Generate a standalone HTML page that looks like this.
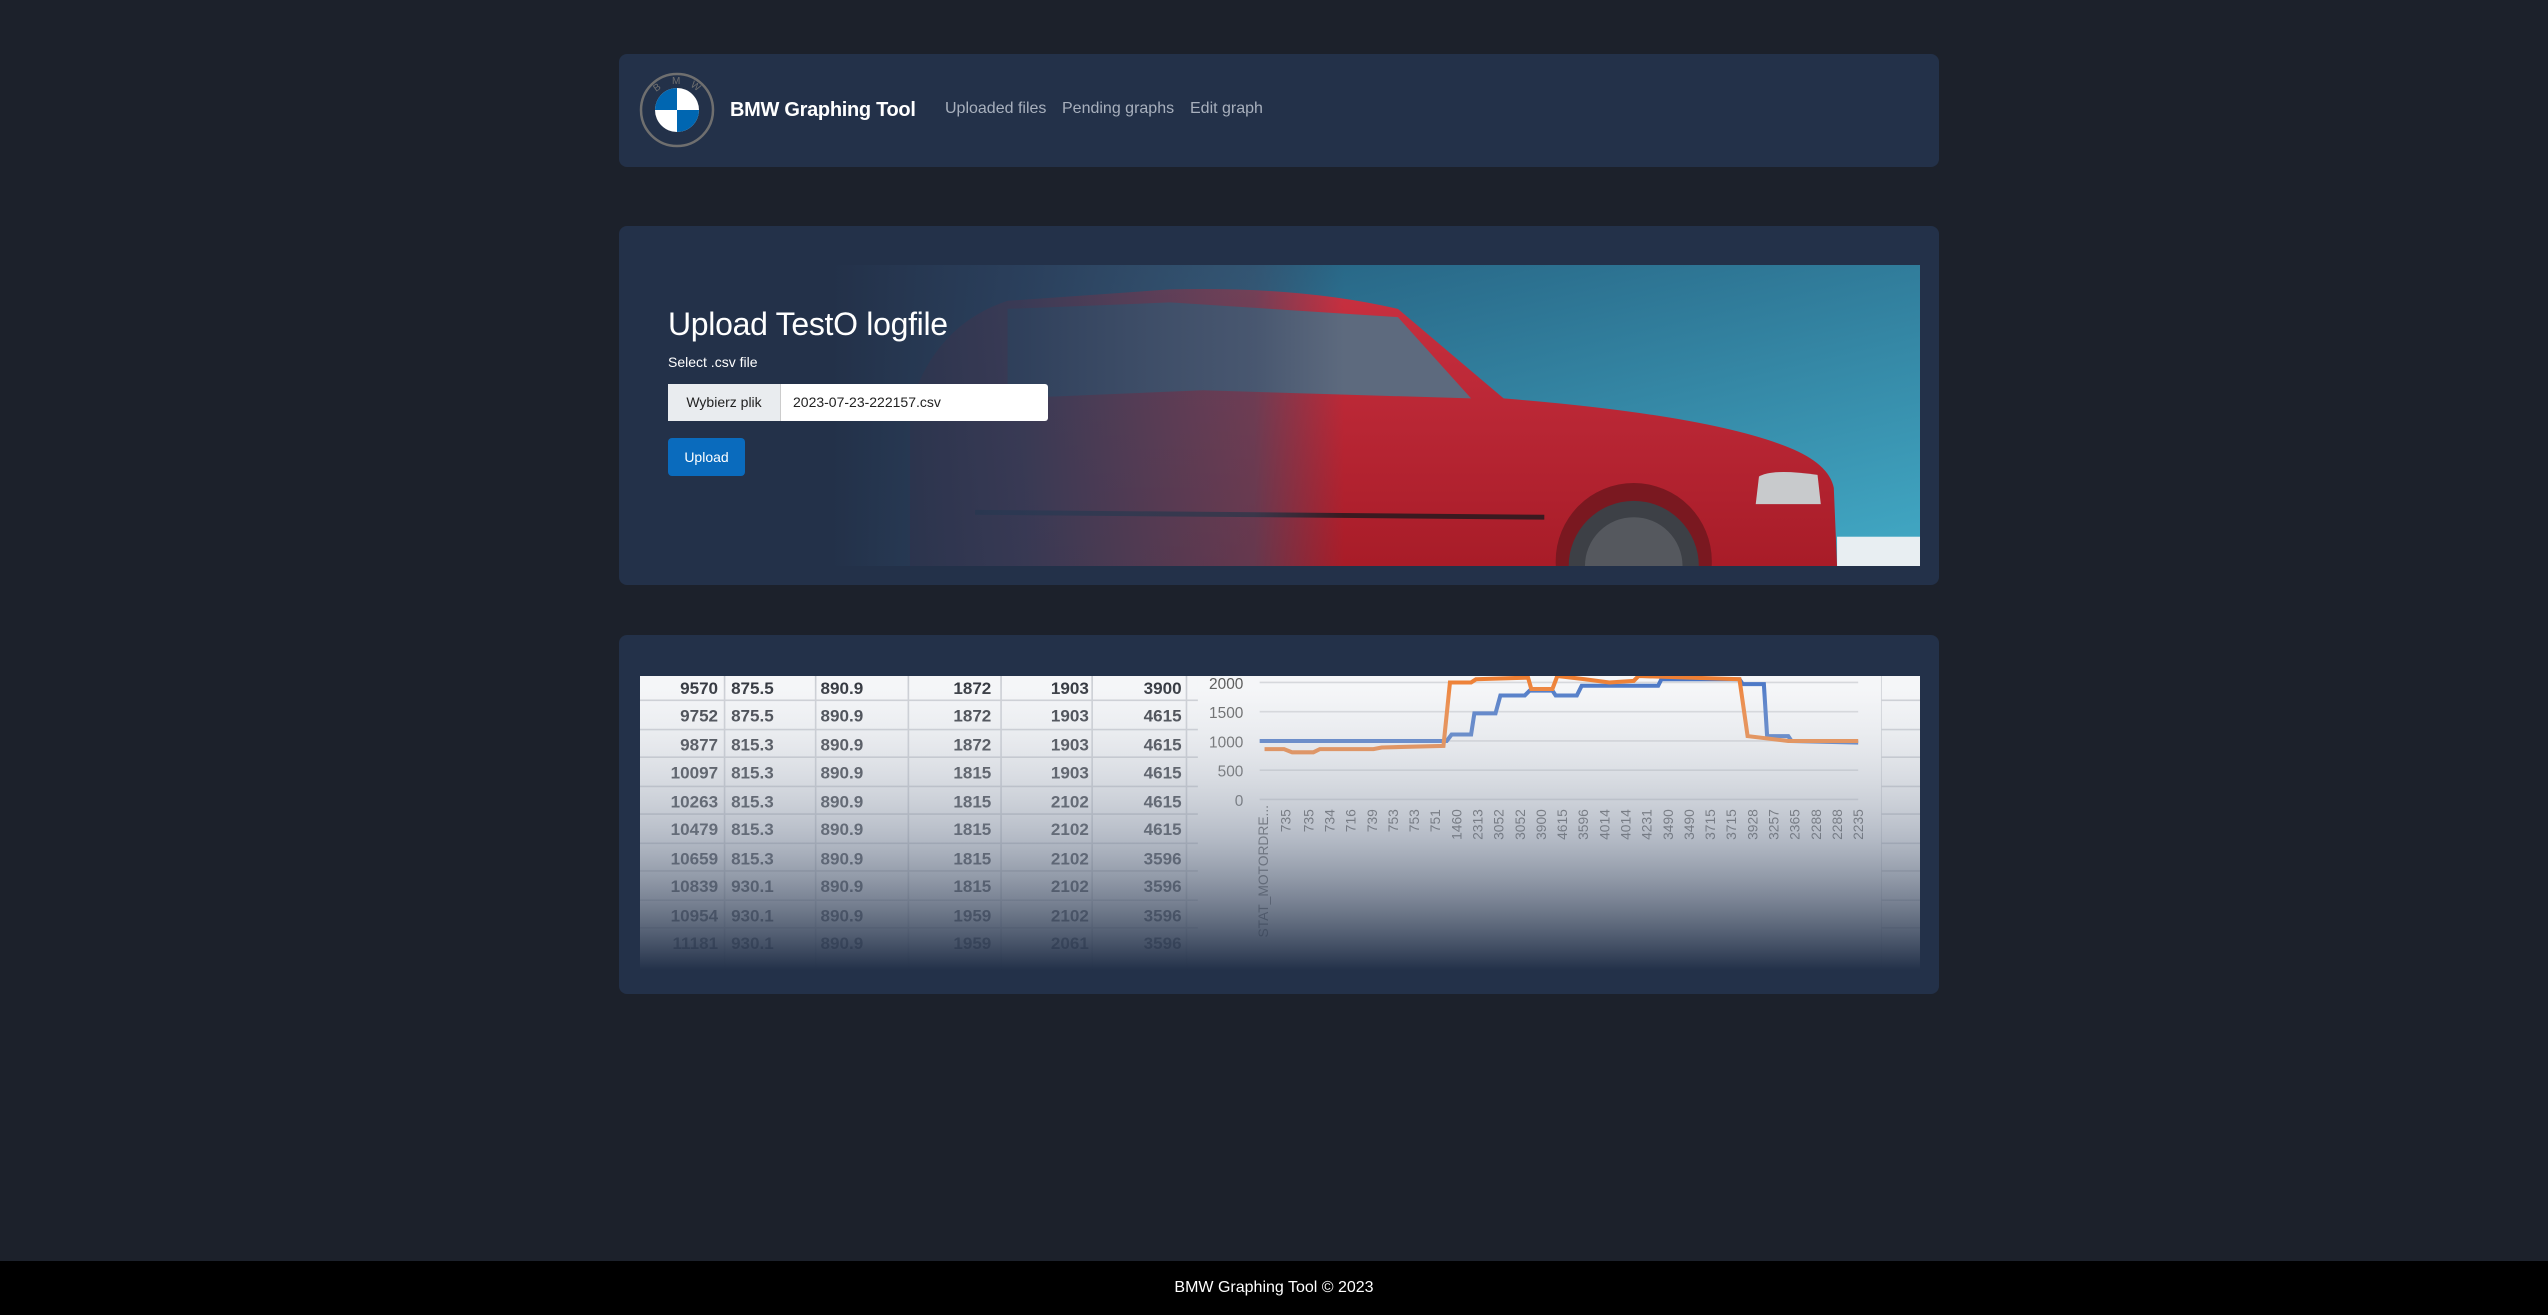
<!DOCTYPE html>
<html><head><meta charset="utf-8"><style>
html,body{margin:0;padding:0;}
body{width:2548px;height:1315px;background:#1c212b;font-family:"Liberation Sans",Arial,sans-serif;position:relative;overflow:hidden;}
.card{position:absolute;left:619px;width:1320px;background:#233149;border-radius:8px;}
.nav{top:54px;height:113px;}
.logo{position:absolute;left:639px;top:72px;}
.brand{position:absolute;left:730px;top:99px;font-size:20px;font-weight:bold;color:#fff;letter-spacing:-0.3px}
.link{position:absolute;top:100px;font-size:16px;color:#a8b0bd;}
.hero{top:226px;height:359px;}
.tbl{top:635px;height:359px;}
.foot{position:absolute;left:0;top:1261px;width:2548px;height:54px;background:#000;color:#fff;font-size:16px;text-align:center;line-height:54px;}
</style></head><body>
<div class="card nav"></div>
<svg class="logo" width="76" height="76" viewBox="0 0 76 76">
<circle cx="38" cy="38" r="36" fill="#233149" stroke="#6f6f6f" stroke-width="2.5"/>
<circle cx="38" cy="38" r="22" fill="#fff"/>
<path d="M38 38 L38 16 A22 22 0 0 0 16 38Z" fill="#0066b1"/>
<path d="M38 38 L38 60 A22 22 0 0 0 60 38Z" fill="#0066b1"/>
<text x="17" y="20" font-size="10" fill="#6f6f6f" font-family="Liberation Sans" transform="rotate(-35 17 20)">B</text>
<text x="33" y="12" font-size="10" fill="#6f6f6f" font-family="Liberation Sans">M</text>
<text x="51" y="14" font-size="10" fill="#6f6f6f" font-family="Liberation Sans" transform="rotate(35 51 14)">W</text>
</svg>
<div class="brand">BMW Graphing Tool</div>
<div class="link" style="left:945px">Uploaded files</div>
<div class="link" style="left:1062px">Pending graphs</div>
<div class="link" style="left:1190px">Edit graph</div>

<div class="card hero"></div>
<svg style="position:absolute;left:640px;top:265px" width="1280" height="301" viewBox="394 163 787 185" preserveAspectRatio="none">
<defs>
<linearGradient id="sky" x1="0" x2="1" y1="0" y2="1"><stop offset="0" stop-color="#1f4f70"/><stop offset="1" stop-color="#42aac6"/></linearGradient>
<linearGradient id="fade" x1="0" x2="1"><stop offset="0" stop-color="#233149"/><stop offset="0.15" stop-color="#233149"/><stop offset="0.3" stop-color="#2b3c58" stop-opacity="0.9"/><stop offset="0.48" stop-color="#3a4a66" stop-opacity="0.6"/><stop offset="0.55" stop-color="#3a4a66" stop-opacity="0"/></linearGradient>
<linearGradient id="body" x1="0" x2="0" y1="0" y2="1"><stop offset="0" stop-color="#c83040"/><stop offset="1" stop-color="#a81c28"/></linearGradient>
</defs>
<rect x="394" y="163" width="787" height="185" fill="url(#sky)"/>
<rect x="1130" y="330" width="51" height="18" fill="#e8eef2"/>
<path d="M560 348 L560 250 Q575 200 620 185 L720 178 Q800 176 860 190 L925 245 Q1050 255 1100 275 Q1125 285 1128 300 L1130 348Z" fill="url(#body)"/>
<path d="M620 190 L720 186 L860 195 L905 245 L740 240 L620 245Z" fill="#5d6a7e"/>
<path d="M600 315 L950 318" stroke="#3a1a20" stroke-width="3"/>
<circle cx="1005" cy="345" r="48" fill="#7a1820"/>
<circle cx="1005" cy="348" r="40" fill="#3d4046"/>
<circle cx="1005" cy="348" r="30" fill="#55585e"/>
<path d="M1082 293 Q1090 288 1118 292 L1120 310 L1080 310Z" fill="#c8cacc"/>
<rect x="394" y="163" width="787" height="185" fill="url(#fade)"/>
</svg>
<div style="position:absolute;left:668px;top:306px;font-size:32px;color:#fff;letter-spacing:-0.3px">Upload TestO logfile</div>
<div style="position:absolute;left:668px;top:354px;font-size:14px;color:#fff">Select .csv file</div>
<div style="position:absolute;left:668px;top:384px;width:380px;height:37px;background:#fff;border-radius:3px;font-size:14px;line-height:37px;">
<span style="display:inline-block;width:112px;background:#e9ecef;text-align:center;color:#222;border-right:1px solid #ccc">Wybierz plik</span><span style="padding-left:12px;color:#222">2023-07-23-222157.csv</span></div>
<div style="position:absolute;left:668px;top:438px;width:77px;height:38px;background:#0a6bbd;border-radius:4px;color:#fff;font-size:14px;line-height:38px;text-align:center">Upload</div>

<div class="card tbl"></div>
<svg style="position:absolute;left:640px;top:676px" width="1280" height="294" viewBox="394 416 787 181" preserveAspectRatio="none" font-family="Liberation Sans" font-weight="bold" font-size="10.5">
<defs><linearGradient id="fd" x1="0" x2="0" y1="0" y2="1"><stop offset="0" stop-color="#fff" stop-opacity="0"/><stop offset="0.1" stop-color="#dfe3e8" stop-opacity="0.2"/><stop offset="0.55" stop-color="#8a94a5" stop-opacity="0.6"/><stop offset="1" stop-color="#233149"/></linearGradient></defs>
<rect x="394" y="416" width="787" height="181" fill="#f5f6f8"/>
<g stroke="#c9ccd2" stroke-width="1">
<line x1="394" y1="431" x2="1181" y2="431"/><line x1="394" y1="449" x2="1181" y2="449"/><line x1="394" y1="466" x2="1181" y2="466"/><line x1="394" y1="484" x2="1181" y2="484"/><line x1="394" y1="501" x2="1181" y2="501"/><line x1="394" y1="519" x2="1181" y2="519"/><line x1="394" y1="536" x2="1181" y2="536"/><line x1="394" y1="554" x2="1181" y2="554"/><line x1="394" y1="571" x2="1181" y2="571"/>
<line x1="446" y1="416" x2="446" y2="597"/><line x1="502" y1="416" x2="502" y2="597"/><line x1="559" y1="416" x2="559" y2="597"/><line x1="616" y1="416" x2="616" y2="597"/><line x1="672" y1="416" x2="672" y2="597"/><line x1="730" y1="416" x2="730" y2="597"/><line x1="1157" y1="416" x2="1157" y2="597"/>
</g>
<rect x="737" y="416" width="420" height="181" fill="#f5f6f8"/>
<g fill="#2a2e36">
<g text-anchor="end">
<text x="442" y="427">9570</text><text x="442" y="444">9752</text><text x="442" y="462">9877</text><text x="442" y="479">10097</text><text x="442" y="497">10263</text><text x="442" y="514">10479</text><text x="442" y="532">10659</text><text x="442" y="549">10839</text><text x="442" y="567">10954</text><text x="442" y="584">11181</text>
<text x="610" y="427">1872</text><text x="610" y="444">1872</text><text x="610" y="462">1872</text><text x="610" y="479">1815</text><text x="610" y="497">1815</text><text x="610" y="514">1815</text><text x="610" y="532">1815</text><text x="610" y="549">1815</text><text x="610" y="567">1959</text><text x="610" y="584">1959</text>
<text x="670" y="427">1903</text><text x="670" y="444">1903</text><text x="670" y="462">1903</text><text x="670" y="479">1903</text><text x="670" y="497">2102</text><text x="670" y="514">2102</text><text x="670" y="532">2102</text><text x="670" y="549">2102</text><text x="670" y="567">2102</text><text x="670" y="584">2061</text>
<text x="727" y="427">3900</text><text x="727" y="444">4615</text><text x="727" y="462">4615</text><text x="727" y="479">4615</text><text x="727" y="497">4615</text><text x="727" y="514">4615</text><text x="727" y="532">3596</text><text x="727" y="549">3596</text><text x="727" y="567">3596</text><text x="727" y="584">3596</text>
</g>
<text x="450" y="427">875.5</text><text x="450" y="444">875.5</text><text x="450" y="462">815.3</text><text x="450" y="479">815.3</text><text x="450" y="497">815.3</text><text x="450" y="514">815.3</text><text x="450" y="532">815.3</text><text x="450" y="549">930.1</text><text x="450" y="567">930.1</text><text x="450" y="584">930.1</text>
<text x="505" y="427">890.9</text><text x="505" y="444">890.9</text><text x="505" y="462">890.9</text><text x="505" y="479">890.9</text><text x="505" y="497">890.9</text><text x="505" y="514">890.9</text><text x="505" y="532">890.9</text><text x="505" y="549">890.9</text><text x="505" y="567">890.9</text><text x="505" y="584">890.9</text>
</g>
<g font-weight="normal" font-size="9.5" fill="#555" text-anchor="end">
<text x="765" y="424">2000</text><text x="765" y="442">1500</text><text x="765" y="460">1000</text><text x="765" y="478">500</text><text x="765" y="496">0</text>
</g>
<g stroke="#d4d6da"><line x1="775" y1="420" x2="1143" y2="420"/><line x1="775" y1="438" x2="1143" y2="438"/><line x1="775" y1="456" x2="1143" y2="456"/><line x1="775" y1="474" x2="1143" y2="474"/><line x1="775" y1="492" x2="1143" y2="492"/></g>
<polyline fill="none" stroke="#4472c4" stroke-width="2.5" points="775,456 890,456 893,452 905,452 907,439 920,439 923,428 938,428 941,425 955,425 957,428 970,428 973,422 1020,422 1022,418 1070,418 1072,421 1085,421 1087,453 1100,453 1102,456 1143,457"/>
<polyline fill="none" stroke="#ed7d31" stroke-width="2.5" points="778,461 790,461 795,463 808,463 812,461 845,461 850,460 888,459 892,420 905,420 908,418 940,417 942,424 955,424 958,416 975,418 990,420 1005,419 1008,416 1070,418 1075,453 1100,456 1143,456"/>
<g font-weight="normal" font-size="8.5" fill="#555">
<text transform="translate(780,577) rotate(-90)">STAT_MOTORDRE...</text>
</g>
<g font-weight="normal" font-size="8.5" fill="#555" text-anchor="end">
<text transform="translate(794,498) rotate(-90)">735</text><text transform="translate(808,498) rotate(-90)">735</text><text transform="translate(821,498) rotate(-90)">734</text><text transform="translate(834,498) rotate(-90)">716</text><text transform="translate(847,498) rotate(-90)">739</text><text transform="translate(860,498) rotate(-90)">753</text><text transform="translate(873,498) rotate(-90)">753</text><text transform="translate(886,498) rotate(-90)">751</text><text transform="translate(899,498) rotate(-90)">1460</text><text transform="translate(912,498) rotate(-90)">2313</text><text transform="translate(925,498) rotate(-90)">3052</text><text transform="translate(938,498) rotate(-90)">3052</text><text transform="translate(951,498) rotate(-90)">3900</text><text transform="translate(964,498) rotate(-90)">4615</text><text transform="translate(977,498) rotate(-90)">3596</text><text transform="translate(990,498) rotate(-90)">4014</text><text transform="translate(1003,498) rotate(-90)">4014</text><text transform="translate(1016,498) rotate(-90)">4231</text><text transform="translate(1029,498) rotate(-90)">3490</text><text transform="translate(1042,498) rotate(-90)">3490</text><text transform="translate(1055,498) rotate(-90)">3715</text><text transform="translate(1068,498) rotate(-90)">3715</text><text transform="translate(1081,498) rotate(-90)">3928</text><text transform="translate(1094,498) rotate(-90)">3257</text><text transform="translate(1107,498) rotate(-90)">2365</text><text transform="translate(1120,498) rotate(-90)">2288</text><text transform="translate(1133,498) rotate(-90)">2288</text><text transform="translate(1146,498) rotate(-90)">2235</text>
</g>
<rect x="394" y="416" width="787" height="181" fill="url(#fd)"/>
</svg>
<div class="foot">BMW Graphing Tool © 2023</div>
</body></html>
